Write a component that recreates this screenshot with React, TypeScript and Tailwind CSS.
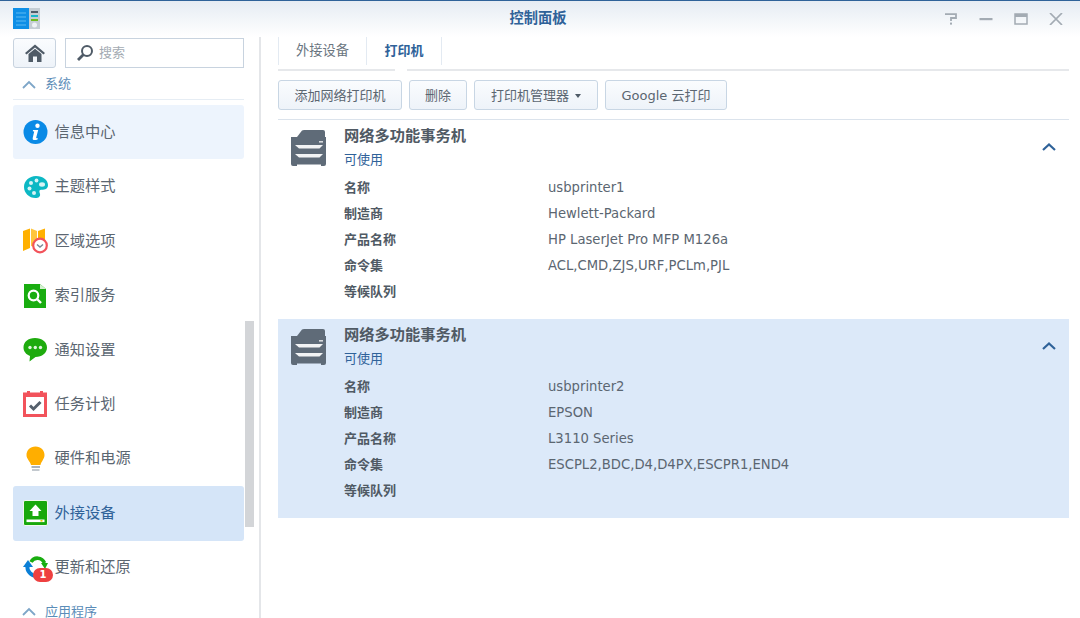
import React from "react";

const font = { fontFamily: '"DejaVu Sans","Noto Sans CJK SC",sans-serif' };

function PrinterIcon() {
  return (
    <svg width="36" height="37" viewBox="0 0 36 37" className="shrink-0">
      <path d="M6 8 L11 1.5 Q12 1 13 1 H32 Q34 1 34 3 V8 Z" fill="#5f6b78" />
      <path d="M0 8 H35 V35 Q35 37 33 37 H30 V35.5 H6 V37 H2 Q0 37 0 35 Z" fill="#5f6b78" />
      <path d="M4 16 H32 L28.5 19.5 H8 Z" fill="#ffffff" opacity="0.92" />
      <path d="M4 25 H32 L28.5 28.5 H8 Z" fill="#ffffff" opacity="0.92" />
      <rect x="28" y="12" width="4" height="1.6" fill="#ffffff" opacity="0.75" />
    </svg>
  );
}

function Chevron() {
  return (
    <svg width="16" height="10" viewBox="0 0 16 10">
      <path d="M2 8 L8 2.5 L14 8" fill="none" stroke="#2f6299" strokeWidth="2.2" />
    </svg>
  );
}

function InfoIcon() {
  return (
    <svg width="26" height="26" viewBox="0 0 26 26">
      <circle cx="12.5" cy="13" r="12" fill="#0a8ae6" />
      <circle cx="14.5" cy="6.8" r="2.2" fill="#fff" />
      <path d="M10 11 H15.2 L13.2 18.6 Q13 19.6 14.6 19 L14.8 20.2 Q12.5 21.4 10.6 21 Q9.2 20.6 9.7 19 L11.2 12.6 L9.8 12.3 Z" fill="#fff" />
    </svg>
  );
}

function PaletteIcon() {
  return (
    <svg width="26" height="26" viewBox="0 0 26 26">
      <path d="M13 2 C20 2 25 6 25 11 C25 16 20 15.5 18 15.8 C15.5 16.2 16.5 18.5 17 20 C17.6 22.5 15.5 24 12.5 24 C6 24 1 19 1 13 C1 7 6 2 13 2 Z" fill="#0cb8c4" />
      <circle cx="8" cy="9" r="2" fill="#d7f3f5" />
      <circle cx="13.5" cy="6.5" r="1.9" fill="#d7f3f5" />
      <circle cx="6.5" cy="14.5" r="2" fill="#d7f3f5" />
      <ellipse cx="19" cy="10.5" rx="3" ry="2.2" fill="#d7f3f5" />
      <circle cx="11" cy="19" r="2" fill="#d7f3f5" />
    </svg>
  );
}

function MapIcon() {
  return (
    <svg width="26" height="26" viewBox="0 0 26 26">
      <path d="M0 3 L7 0.5 V20 L0 23 Z" fill="#ffb000" />
      <path d="M8 0.5 L14 3 V20 L8 18 Z" fill="#ffc53d" />
      <path d="M15 3 L22 0.5 V12 L15 14 Z" fill="#ffb000" />
      <circle cx="17" cy="17.5" r="6.8" fill="#fff" stroke="#f2535b" strokeWidth="2.2" />
      <path d="M14 16.5 L17 19 L20 16.5" fill="none" stroke="#7a8796" strokeWidth="1.5" />
    </svg>
  );
}

function SearchDocIcon() {
  return (
    <svg width="26" height="26" viewBox="0 0 26 26">
      <path d="M1 1 H17 L23 6 V25 H1 Z" fill="#19ad10" />
      <path d="M17 1 L23 6 H17 Z" fill="#d5f0d2" />
      <circle cx="10.5" cy="12.5" r="4.8" fill="none" stroke="#fff" strokeWidth="2.2" />
      <path d="M14 16 L18 20" stroke="#fff" strokeWidth="2.4" />
    </svg>
  );
}

function ChatIcon() {
  return (
    <svg width="26" height="26" viewBox="0 0 26 26">
      <path d="M12 1 C19 1 24 5 24 10.5 C24 16 19 20 12.5 20 L6.5 24.5 L7 19 C3 17.5 0.5 14.3 0.5 10.5 C0.5 5 5 1 12 1 Z" fill="#1eab0e" />
      <circle cx="7" cy="10.5" r="1.7" fill="#dff5dc" />
      <circle cx="12.3" cy="10.5" r="1.7" fill="#dff5dc" />
      <circle cx="17.5" cy="10.5" r="1.7" fill="#dff5dc" />
    </svg>
  );
}

function CalendarIcon() {
  return (
    <svg width="26" height="26" viewBox="0 0 26 26">
      <rect x="1.5" y="3" width="21" height="21.5" fill="#fff" stroke="#f2535b" strokeWidth="3" />
      <rect x="1" y="2" width="22" height="4" fill="#f2535b" />
      <rect x="4" y="0" width="3" height="3" fill="#f2535b" />
      <rect x="17" y="0" width="3" height="3" fill="#f2535b" />
      <path d="M7 14.5 L10.5 18 L17.5 11" fill="none" stroke="#55606c" strokeWidth="3" />
    </svg>
  );
}

function BulbIcon() {
  return (
    <svg width="26" height="26" viewBox="0 0 26 26">
      <path d="M12.5 0.5 C18 0.5 21.5 4.5 21.5 9 C21.5 13 18.5 15 17.5 19 H8 C7 15 3.5 13 3.5 9 C3.5 4.5 7 0.5 12.5 0.5 Z" fill="#ffae00" />
      <rect x="8.5" y="20" width="8.5" height="2" fill="#aab2ba" />
      <rect x="9" y="23" width="7.5" height="2" fill="#c3c9cf" />
    </svg>
  );
}

function UploadIcon() {
  return (
    <svg width="26" height="26" viewBox="0 0 26 26">
      <rect x="0.5" y="0.5" width="24" height="25" rx="1.5" fill="#18a80c" stroke="#f0f8ee" />
      <path d="M12.5 4.5 L18.5 11 H15.5 V16 H9.5 V11 H6.5 Z" fill="#fff" />
      <rect x="3.5" y="19.5" width="18" height="2.6" fill="#fff" />
      <rect x="17.5" y="20" width="2" height="1.6" fill="#f3c400" />
    </svg>
  );
}

function UpdateIcon() {
  return (
    <svg width="26" height="26" viewBox="0 0 26 26">
      <path d="M8 7 C11 1.5 19 2 21.5 8" fill="none" stroke="#19ad10" strokeWidth="3.6" />
      <path d="M25 8 L18 8 L22 14 Z" fill="#19ad10" />
      <path d="M4.5 10 C3.5 16 8 21 14 21" fill="none" stroke="#0a7fd6" strokeWidth="4" />
      <path d="M0 12 L10 12 L5 5 Z" fill="#0a7fd6" />
    </svg>
  );
}

const items: { label: string; icon: React.ReactNode; badge?: boolean }[] = [
  { label: "信息中心", icon: <InfoIcon /> },
  { label: "主题样式", icon: <PaletteIcon /> },
  { label: "区域选项", icon: <MapIcon /> },
  { label: "索引服务", icon: <SearchDocIcon /> },
  { label: "通知设置", icon: <ChatIcon /> },
  { label: "任务计划", icon: <CalendarIcon /> },
  { label: "硬件和电源", icon: <BulbIcon /> },
  { label: "外接设备", icon: <UploadIcon /> },
  { label: "更新和还原", icon: <UpdateIcon />, badge: true },
];

function SectionHead({ label }: { label: string }) {
  return (
    <div className="flex items-center h-[30px] pl-[9px] gap-[9px] text-[13px] text-[#5b8db8]">
      <svg width="14" height="9" viewBox="0 0 14 9">
        <path d="M1 8 L7 2 L13 8" fill="none" stroke="#7ea6c8" strokeWidth="1.8" />
      </svg>
      <span>{label}</span>
    </div>
  );
}

function Sidebar() {
  return (
    <div className="relative w-[261px] shrink-0 border-r-2 border-[#e4e6e9] pl-[13px] pr-[15px] pt-[1px] overflow-hidden">
      <div className="flex gap-[9px] h-[30px]">
        <div className="w-[43px] h-[30px] rounded-[3px] border border-[#c8d3df] bg-gradient-to-b from-[#fafcfe] to-[#eef3f9] flex items-center justify-center">
          <svg width="20" height="18" viewBox="0 0 20 18">
            <path d="M10 0.5 L20 9 L18.5 10.5 L10 3.5 L1.5 10.5 L0 9 Z" fill="#4f5b67" />
            <path d="M3.5 10 L10 4.8 L16.5 10 V18 H12 V12.5 H8 V18 H3.5 Z" fill="#4f5b67" />
          </svg>
        </div>
        <div className="flex-1 h-[30px] border border-[#c8d3df] bg-white flex items-center pl-[10px] gap-[5px]">
          <svg width="18" height="18" viewBox="0 0 18 18">
            <circle cx="11" cy="7" r="5" fill="none" stroke="#4f5b67" strokeWidth="2" />
            <path d="M7.5 10.5 L2 16" stroke="#4f5b67" strokeWidth="2.8" />
          </svg>
          <span className="text-[13px] text-[#a4abb3]">搜索</span>
        </div>
      </div>
      <div className="mt-[1px] border-b border-[#e6edf4] h-[31px]">
        <SectionHead label="系统" />
      </div>
      <div className="mt-[5px] flex flex-col">
        {items.map((it, i) => (
          <div
            key={it.label}
            className={
              "relative flex items-center h-[54.45px] shrink-0 pl-[10px] gap-[5.5px] text-[15.25px] rounded-[3px] " +
              (i === 0
                ? "bg-[#edf4fd] text-[#5b6671]"
                : i === 7
                ? "bg-[#d5e5f8] text-[#2f6299]"
                : "text-[#5b6671]")
            }
          >
            <span className="w-[26px] h-[26px] shrink-0 flex">{it.icon}</span>
            <span>{it.label}</span>
            {it.badge && (
              <span className="absolute left-[20px] top-[27px] w-[20px] h-[14px] rounded-full bg-[#ee4040] text-white text-[10px] font-bold leading-[14px] text-center">
                1
              </span>
            )}
          </div>
        ))}
        <div className="mt-[2px]">
          <SectionHead label="应用程序" />
        </div>
      </div>
      <div className="absolute left-[245px] top-[284px] w-[9px] h-[206px] bg-[#d3d5d8]" />
    </div>
  );
}

const Btn = ({ children, w }: { children: React.ReactNode; w: string }) => (
  <div
    className={
      "h-[30px] pt-[1px] rounded-[3px] border border-[#c8d6e4] bg-gradient-to-b from-[#fafcfe] to-[#eef3f9] flex items-center justify-center text-[13px] text-[#5b6671] " +
      w
    }
  >
    {children}
  </div>
);

function Printer({ name, rows, selected }: { name: string; rows: string[]; selected?: boolean }) {
  const labels = ["名称", "制造商", "产品名称", "命令集", "等候队列"];
  return (
    <div className={"flex h-[199px] pl-[13px] pr-[12px] pt-[9px] " + (selected ? "bg-[#dce9f9]" : "bg-white")}>
      <PrinterIcon />
      <div className="flex-1 pl-[17px]">
        <div className="h-[14px] flex items-center text-[15.25px] font-bold text-[#505a64]">{name}</div>
        <div className="mt-[10px] h-[14px] flex items-center text-[13px] text-[#2f6299]">可使用</div>
        <div className="mt-[8px] flex flex-col">
          {labels.map((l, i) => (
            <div key={l} className="flex items-center h-[26px] text-[13px]">
              <span className="w-[204px] font-bold text-[#505a64]">{l}</span>
              <span className="text-[13.2px] text-[#5b6671]">{rows[i]}</span>
            </div>
          ))}
        </div>
      </div>
      <div className="pt-[13px]">
        <Chevron />
      </div>
    </div>
  );
}

export default function App() {
  return (
    <div style={font} className="w-[1080px] h-[618px] overflow-hidden bg-white flex flex-col">
      <div className="h-[37px] shrink-0 border-t border-[#2f6299] bg-gradient-to-b from-[#e6ecf3] to-[#ffffff] flex items-center px-[15px]">
        <div className="flex-1 flex -ml-[2px]">
          <svg width="27" height="24" viewBox="0 0 27 24" className="shrink-0">
            <rect x="0" y="1" width="16" height="21" fill="#0f8fe6" />
            <path d="M3 6 H13 M3 10 H13 M3 14 H13 M3 18 H13" stroke="#5fbaf2" strokeWidth="1" />
            <rect x="16" y="1" width="11" height="21" fill="#c4cdd4" />
            <rect x="18" y="4" width="7" height="2" fill="#4f5b67" />
            <rect x="18" y="8" width="7" height="2" fill="#18b7c9" />
            <rect x="18" y="12" width="7" height="2" fill="#6dbb1c" />
            <circle cx="21.5" cy="18" r="2.5" fill="#eef2f5" />
          </svg>
        </div>
        <div className="text-[14.25px] font-bold text-[#2f6299]">控制面板</div>
        <div className="flex-1 flex items-center justify-end gap-[21px] pr-[2px]">
          <svg width="14" height="12" viewBox="0 0 14 12">
            <path d="M1 1.2 H12 V5 H7 V8" fill="none" stroke="#a3abb3" strokeWidth="1.8" />
            <rect x="6" y="9.6" width="2" height="2" fill="#a3abb3" />
          </svg>
          <svg width="14" height="12" viewBox="0 0 14 12">
            <rect x="0.5" y="5" width="13" height="2.2" fill="#a3abb3" />
          </svg>
          <svg width="14" height="12" viewBox="0 0 14 12">
            <rect x="1" y="1" width="12" height="10" fill="none" stroke="#a3abb3" strokeWidth="1.5" />
            <rect x="1" y="1" width="12" height="3" fill="#a3abb3" />
          </svg>
          <svg width="14" height="12" viewBox="0 0 14 12">
            <path d="M1 0 L13 12 M13 0 L1 12" stroke="#a3abb3" strokeWidth="1.7" />
          </svg>
        </div>
      </div>
      <div className="flex flex-1 min-h-0">
        <Sidebar />
        <div className="flex-1 pl-[17px] pr-[11px] flex flex-col">
          <div className="relative h-[34px] shrink-0 border-b-2 border-[#e6e8eb] flex items-stretch">
            <div className="w-[89px] h-[28px] border-l border-r border-[#e3eaf2] flex items-center justify-center text-[13.25px] text-[#6a7580]">
              外接设备
            </div>
            <div className="w-[75px] h-[28px] border-r border-[#e3eaf2] flex items-center justify-center text-[13px] font-bold text-[#2f6299]">
              打印机
            </div>
            <div className="absolute left-[117px] bottom-[-2px] w-[12px] h-[6px] bg-white" />
          </div>
          <div className="mt-[9px] flex gap-[7px] h-[30px] shrink-0">
            <Btn w="w-[124px]">添加网络打印机</Btn>
            <Btn w="w-[58px]">删除</Btn>
            <Btn w="w-[124px]">
              打印机管理器
              <span className="ml-[6px] w-0 h-0 border-x-[3.5px] border-x-transparent border-t-[4px] border-t-[#4f5b67]" />
            </Btn>
            <Btn w="w-[122px]">Google 云打印</Btn>
          </div>
          <div className="mt-[9px] border-t border-[#dbe3ec] shrink-0" />
          <Printer
            name="网络多功能事务机"
            rows={["usbprinter1", "Hewlett-Packard", "HP LaserJet Pro MFP M126a", "ACL,CMD,ZJS,URF,PCLm,PJL", ""]}
          />
          <Printer
            selected
            name="网络多功能事务机"
            rows={["usbprinter2", "EPSON", "L3110 Series", "ESCPL2,BDC,D4,D4PX,ESCPR1,END4", ""]}
          />
        </div>
      </div>
    </div>
  );
}
